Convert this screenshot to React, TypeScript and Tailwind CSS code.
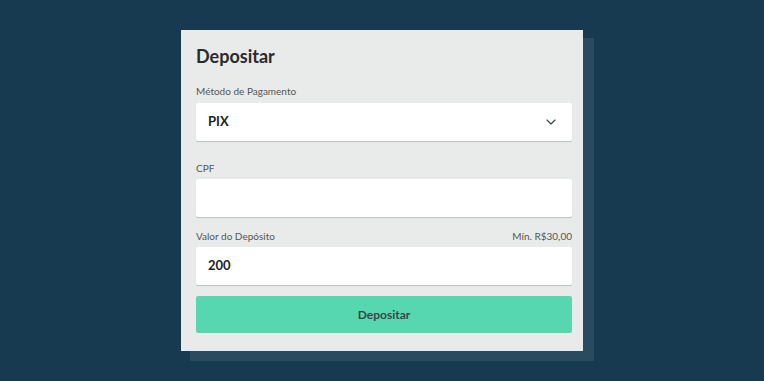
import { ChevronDown } from "lucide-react";

const font = { fontFamily: "Lato, 'Noto Sans', sans-serif" };

function Field({ children }: { children?: React.ReactNode }) {
  return (
    <div className="flex h-[38px] items-center justify-between rounded-[2px] bg-white px-[12px] shadow-[0_1px_1px_rgba(0,0,0,0.18)]">
      {children}
    </div>
  );
}

export default function App() {
  return (
    <div className="flex min-h-[381px] w-full items-start justify-center bg-[#173a50] pt-[30px]" style={font}>
      <div className="w-[402px] bg-[#e9ebea] pb-[18px] pl-[15px] pr-[11px] pt-[14px] shadow-[10px_9px_0_1px_#2a4a5d]">
        <h1 className="text-[18px] font-bold leading-[24px] text-[#2b2b2b]">Depositar</h1>

        <label className="mt-[16px] block text-[10px] leading-[14px] text-[#555]">Método de Pagamento</label>
        <div className="mt-[5px]">
          <Field>
            <span className="text-[13px] font-bold text-[#222]">PIX</span>
            <ChevronDown size={16} strokeWidth={1.75} className="mr-[1px] text-[#3d4a4a]" />
          </Field>
        </div>

        <label className="mt-[20px] block text-[10px] leading-[14px] text-[#555]">CPF</label>
        <div className="mt-[4px]">
          <Field />
        </div>

        <div className="mt-[12px] flex justify-between text-[10px] leading-[14px] text-[#555]">
          <span>Valor do Depósito</span>
          <span>Mín. R$30,00</span>
        </div>
        <div className="mt-[4px]">
          <Field>
            <span className="text-[13px] font-bold text-[#222]">200</span>
          </Field>
        </div>

        <button className="mt-[11px] flex h-[37px] w-full items-center justify-center rounded-[2px] bg-[#57d7b0] text-[12px] font-bold text-[#3a4448]">
          Depositar
        </button>
      </div>
    </div>
  );
}
